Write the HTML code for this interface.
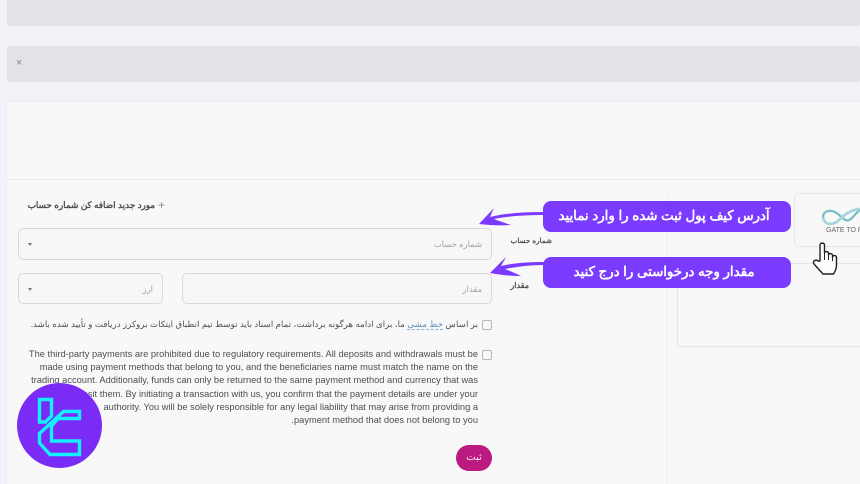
<!DOCTYPE html>
<html lang="fa"><head><meta charset="utf-8"><style>
html,body{margin:0;padding:0;background:#f2f1f7}
body{width:860px;height:484px;overflow:hidden;background:#f2f1f7;position:relative;font-family:"Liberation Sans","Noto Sans CJK SC",sans-serif}
#w{left:0;top:0;width:860px;height:484px;overflow:hidden;filter:blur(.35px)}
div,span,svg{position:absolute;box-sizing:border-box}
.bar{left:7px;width:853px;background:#e4e2e6;border:1px solid #e8e2e6;border-right:0;border-radius:3px}
.inp{border:1px solid #dcd8da;border-radius:5px;background:#f7f7f8}
.ph{font-size:8.4px;color:#a5a3a6;white-space:nowrap;direction:rtl;line-height:12px}
.caret{width:0;height:0;border-left:2.5px solid transparent;border-right:2.5px solid transparent;border-top:3px solid #777}
.cb{width:10px;height:10px;border:1px solid #b9b5b9;border-radius:2px;background:#f8f8f9}
.en{right:382px;font-size:9.3px;line-height:13px;color:#4f4d54;white-space:nowrap;direction:ltr}
.fa{font-weight:bold;white-space:nowrap;direction:rtl}
.call{left:543px;width:248px;height:31px;background:#7b3bff;border-radius:8px;color:#fff;font-size:13.3px;font-weight:bold;text-align:center;line-height:30px;direction:rtl;white-space:nowrap;padding-right:6px}
</style></head><body><div id="w">
<div class="bar" style="top:-4px;height:30px"></div>
<div class="bar" style="top:46px;height:36px"></div>
<div style="left:16px;top:57px;font-size:11px;color:#8a888c;line-height:12px">×</div>
<div style="left:6px;top:101px;width:854px;height:383px;background:#f8f8f9;border:1px solid #ecebef;border-right:0;border-bottom:0;border-radius:4px 0 0 0"></div>
<div style="left:7px;top:179px;width:853px;height:1px;background:#eaeaec"></div>
<div style="left:667px;top:194px;width:1px;height:290px;background:#edecef"></div>
<div style="left:677px;top:263px;width:190px;height:84px;border:1px solid #e6e4e8;border-radius:4px"></div>
<div style="left:794px;top:193px;width:70px;height:54px;border:1px solid #e8e6ea;border-radius:4px;background:#f8f8f9"></div>

<svg style="left:820px;top:205px" width="40" height="24" viewBox="0 0 40 24"><path d="M3 12C3 5 12 4 18 9C23 13 26 18 31 14C34 11 36 8 40 5" fill="none" stroke="#5fb3bd" stroke-width="2.200" opacity=".85"/><path d="M3 12C4 20 13 21 19 15C24 10 30 5 40 4" fill="none" stroke="#a5d6de" stroke-width="2.800"/></svg>
<div style="left:826px;top:227px;font-size:7px;color:#666;white-space:nowrap;line-height:8px">GATE TO PAY</div>

<svg style="left:811px;top:241px" width="30" height="36" viewBox="0 0 30 36"><path d="M9 20V4c0-2.500 4.500-2.500 4.500 0v8c0-2 4-2 4 .5v1.500c0-2 4-2 4 .5v1.500c0-2 4-2 4 .5v7.500c0 3-1 6-3 9H12L3 23c-2-3 2-5 4-3z" fill="#fdfdfd" stroke="#222" stroke-width="1.400" stroke-linejoin="round"/><path d="M13.500 12v7M17.500 14v5M21.500 16v4" stroke="#222" stroke-width="1"/></svg>

<div class="fa" style="right:705px;top:199px;font-size:8.8px;color:#4e4c52;line-height:13px">مورد جدید اضافه کن شماره حساب</div>
<div style="left:158px;top:198px;font-size:12px;color:#908e92;line-height:14px">+</div>

<div class="inp" style="left:18px;top:228px;width:474px;height:32px"></div>
<div class="ph" style="right:378px;top:238px">شماره حساب</div>
<div class="caret" style="left:28px;top:243px"></div>
<div class="fa" style="right:308px;top:234px;font-size:7.2px;color:#4e4c52;line-height:13px">شماره حساب</div>

<div class="inp" style="left:182px;top:273px;width:310px;height:31px"></div>
<div class="ph" style="right:378px;top:283px">مقدار</div>
<div class="fa" style="right:331px;top:279px;font-size:8px;color:#4e4c52;line-height:13px">مقدار</div>
<div class="inp" style="left:18px;top:273px;width:145px;height:31px"></div>
<div class="ph" style="right:707px;top:283px">ارز</div>
<div class="caret" style="left:28px;top:288px"></div>

<div class="cb" style="left:482px;top:320px"></div>
<div style="right:382px;top:317px;font-size:8.7px;line-height:14px;color:#4f4d54;white-space:nowrap;direction:rtl">بر اساس <span style="position:static;color:#5b8db8;border-bottom:1px dashed #8db4d4">خط مشی</span> ما، برای ادامه هرگونه برداشت، تمام اسناد باید توسط تیم انطباق ایتکات بروکرز دریافت و تأیید شده باشد.</div>

<div class="cb" style="left:482px;top:350px"></div>
<div class="en" style="top:348px">The third-party payments are prohibited due to regulatory requirements. All deposits and withdrawals must be</div>
<div class="en" style="top:361px">made using payment methods that belong to you, and the beneficiaries name must match the name on the</div>
<div class="en" style="top:374px">trading account. Additionally, funds can only be returned to the same payment method and currency that was</div>
<div class="en" style="top:388px">used to deposit them. By initiating a transaction with us, you confirm that the payment details are under your</div>
<div class="en" style="top:401px">authority. You will be solely responsible for any legal liability that may arise from providing a</div>
<div class="en" style="top:414px">.payment method that does not belong to you</div>

<div style="left:456px;top:445px;width:36px;height:26px;border-radius:13px;background:#bb1a80;color:#f6e3ef;font-size:10px;text-align:center;line-height:25px;direction:rtl">ثبت</div>

<svg style="left:476px;top:205px" width="70" height="75" viewBox="0 0 70 75">
<path d="M3 19L18 3C16 7 15 10 14 12C30 8 50 7 68 7V10C50 10 32 11 18 14C23 16 29 18 35 20C24 21 12 20 3 19Z" fill="#7b3bff"/>
<path d="M14 68L30 52C28 56 26 59 25 61C38 58 52 57 68 57V60C52 60 40 62 29 64C34 66 39 68 45 71C35 71 24 70 14 68Z" fill="#7b3bff"/>
</svg>
<div class="call" style="top:201px">آدرس کیف پول ثبت شده را وارد نمایید</div>
<div class="call" style="top:257px">مقدار وجه درخواستی را درج کنید</div>

<div style="left:17px;top:383px;width:85px;height:85px;border-radius:50%;background:#7a2bf5"></div>
<svg style="left:17px;top:383px" width="85" height="85" viewBox="0 0 85 85">
<path d="M22.500 16.500H34.500V33L28.500 39H22.500Z" fill="none" stroke="#12f1ff" stroke-width="3.400"/>
<path d="M46.500 28.500H62.500V35.500H41L34.500 43V58H62.500V71.500H33L22.500 60V50.500Z" fill="none" stroke="#12f1ff" stroke-width="3.400"/>
</svg>
</div></body></html>
